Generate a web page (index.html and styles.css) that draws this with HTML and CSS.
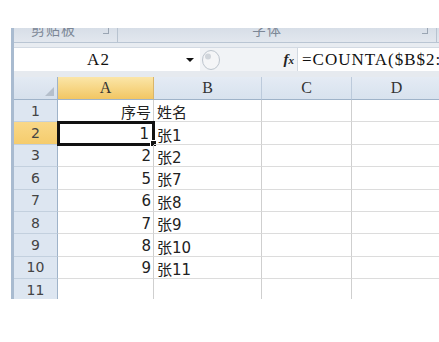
FILE: index.html
```html
<!DOCTYPE html>
<html lang="zh">
<head>
  <meta charset="UTF-8">
  <title>Excel - COUNTA</title>
  <link rel="stylesheet" href="styles.css">
</head>
<body>
  <div class="window">
    <!-- ribbon group labels, cut off at the top -->
    <div class="ribbon">
      <div class="group group-clip">
        <span class="group-label">剪贴板</span>
        <span class="launcher"></span>
      </div>
      <div class="group group-font">
        <span class="group-label">字体</span>
        <span class="launcher"></span>
      </div>
    </div>
    <div class="ribbon-foot"></div>

    <div class="formula-bar">
      <div class="name-box">
        <span class="name-text">A2</span>
        <span class="name-arrow"></span>
      </div>
      <div class="bar-buttons">
        <svg class="round-btn" width="20" height="22" viewBox="0 0 20 22">
          <ellipse cx="10" cy="11" rx="8.5" ry="9.5" fill="#f4f5f7" stroke="#bcc4cd" stroke-width="1"/>
          <circle cx="7" cy="7.5" r="3" fill="#d0d5db"/>
        </svg>
        <span class="fx"><i>f</i><i class="fx-x">x</i></span>
      </div>
      <div class="formula">=COUNTA($B$2:$B$11)</div>
    </div>

    <div class="bar-gap"></div>

    <div class="sheet">
      <div class="corner"><span class="corner-tri"></span></div>
      <div class="col-head active">A</div>
      <div class="col-head">B</div>
      <div class="col-head">C</div>
      <div class="col-head">D</div>

      <div class="row-head">1</div>
      <div class="cell num">序号</div>
      <div class="cell">姓名</div>
      <div class="cell"></div>
      <div class="cell"></div>

      <div class="row-head active">2</div>
      <div class="cell num selected">1</div>
      <div class="cell">张1</div>
      <div class="cell"></div>
      <div class="cell"></div>

      <div class="row-head">3</div>
      <div class="cell num">2</div>
      <div class="cell">张2</div>
      <div class="cell"></div>
      <div class="cell"></div>

      <div class="row-head">6</div>
      <div class="cell num">5</div>
      <div class="cell">张7</div>
      <div class="cell"></div>
      <div class="cell"></div>

      <div class="row-head">7</div>
      <div class="cell num">6</div>
      <div class="cell">张8</div>
      <div class="cell"></div>
      <div class="cell"></div>

      <div class="row-head">8</div>
      <div class="cell num">7</div>
      <div class="cell">张9</div>
      <div class="cell"></div>
      <div class="cell"></div>

      <div class="row-head">9</div>
      <div class="cell num">8</div>
      <div class="cell">张10</div>
      <div class="cell"></div>
      <div class="cell"></div>

      <div class="row-head">10</div>
      <div class="cell num">9</div>
      <div class="cell">张11</div>
      <div class="cell"></div>
      <div class="cell"></div>

      <div class="row-head">11</div>
      <div class="cell"></div>
      <div class="cell"></div>
      <div class="cell"></div>
      <div class="cell"></div>
    </div>
  </div>
</body>
</html>
```

FILE: styles.css
```css
body {
  margin: 0;
  padding: 0;
  background-color: #fff;
  font-family: "DejaVu Sans", "Noto Sans CJK SC", sans-serif;
}

.window {
  margin: 28px 0 0 11px;
  height: 271px;
  border-left: 3px solid #a9bbd0;
  overflow: hidden;
  display: flex;
  flex-direction: column;
}

/* ribbon */
.ribbon {
  height: 14px;
  display: flex;
  background: linear-gradient(to bottom, #d7dee7, #e2e7ee);
  border-bottom: 1px solid #b9c5d3;
  overflow: hidden;
  flex-shrink: 0;
}

.group {
  position: relative;
  display: flex;
  justify-content: center;
  border-right: 1px solid #b8c3d0;
}

.group-clip {
  width: 103px;
}

.group-font {
  width: 318px;
}

.group-label {
  margin-top: -9px;
  font-family: "Noto Sans CJK SC", sans-serif;
  font-size: 14px;
  line-height: 20px;
  letter-spacing: 1px;
  color: #7c8796;
}

.group-clip .group-label {
  margin-left: -24px;
}

.group-font .group-label {
  margin-left: -20px;
}

.launcher {
  position: absolute;
  top: 0;
  right: 8px;
  width: 5px;
  height: 5px;
  border-right: 1px solid #9aa5b3;
  border-bottom: 1px solid #9aa5b3;
}

.ribbon-foot {
  height: 4px;
  background-color: #e8ecf1;
  border-bottom: 1px solid #d3dae3;
  flex-shrink: 0;
}

/* formula bar */
.formula-bar {
  height: 23px;
  display: flex;
  flex-shrink: 0;
  background-color: #f1f3f6;
}

.name-box {
  width: 186px;
  display: flex;
  align-items: center;
  background-color: #fff;
}

.name-text {
  flex: 1;
  text-align: center;
  font-family: "Liberation Serif", serif;
  font-size: 17px;
  letter-spacing: 1px;
  color: #111;
  padding-left: 1px;
}

.name-arrow {
  width: 0;
  height: 0;
  margin: 0 6px 0 4px;
  border-left: 4px solid transparent;
  border-right: 4px solid transparent;
  border-top: 4px solid #111;
}

.bar-buttons {
  width: 95px;
  display: flex;
  align-items: center;
  justify-content: space-between;
  padding-right: 2px;
  border-right: 1px solid #d2d9e1;
}

.round-btn {
  display: block;
  margin-left: 1px;
}

.fx {
  font-family: "Liberation Serif", serif;
  font-weight: bold;
  font-size: 15px;
  color: #222;
  padding-right: 1px;
}

.fx-x {
  font-size: 11px;
}

.formula {
  flex: 1;
  background-color: #fff;
  padding-left: 4px;
  font-family: "Liberation Serif", serif;
  font-size: 17px;
  letter-spacing: 1px;
  line-height: 23px;
  color: #111;
  white-space: nowrap;
  overflow: hidden;
}

.bar-gap {
  height: 6px;
  flex-shrink: 0;
  background-color: #e6eaef;
}

/* grid */
.sheet {
  display: grid;
  grid-template-columns: 44px 96px 108px 90px 90px;
  grid-template-rows: 23px;
  grid-auto-rows: 22.4px;
}

.corner {
  position: relative;
  background: linear-gradient(to bottom, #e3eaf3, #d6e0ec);
  border-right: 1px solid #9fb3c9;
  border-bottom: 1px solid #9fb3c9;
}

.corner-tri {
  position: absolute;
  right: 3px;
  bottom: 3px;
  width: 0;
  height: 0;
  border-left: 9px solid transparent;
  border-bottom: 9px solid #b5bfcb;
}

.col-head {
  display: flex;
  align-items: center;
  justify-content: center;
  background: linear-gradient(to bottom, #e4ebf4, #d8e2ee);
  border-right: 1px solid #bccadb;
  border-bottom: 1px solid #9fb3c9;
  font-family: "Liberation Serif", serif;
  font-size: 16px;
  color: #333;
}

.col-head.active {
  background: linear-gradient(to bottom, #fbe6a8, #f2c663);
  border-right-color: #d9b56a;
}

.row-head {
  display: flex;
  align-items: center;
  justify-content: center;
  background-color: #dde6f1;
  border-right: 1px solid #9fb3c9;
  border-bottom: 1px solid #c3d0de;
  font-size: 14px;
  color: #444;
}

.row-head.active {
  background: linear-gradient(to bottom, #f9d888, #f5cc6d);
}

.cell {
  position: relative;
  display: flex;
  align-items: center;
  padding: 2px 3px 0 3px;
  border-right: 1px solid #cfcfcf;
  border-bottom: 1px solid #dcdcdc;
  font-size: 15px;
  color: #222;
  white-space: nowrap;
}

.cell.num {
  justify-content: flex-end;
  padding-right: 2px;
}

.cell.selected {
  outline: 3px solid #111;
  outline-offset: -2px;
  padding-right: 4px;
}

.cell.selected::after {
  content: '';
  position: absolute;
  right: -4px;
  bottom: -3px;
  width: 5px;
  height: 5px;
  background-color: #111;
  border: 1px solid #fff;
}
```
